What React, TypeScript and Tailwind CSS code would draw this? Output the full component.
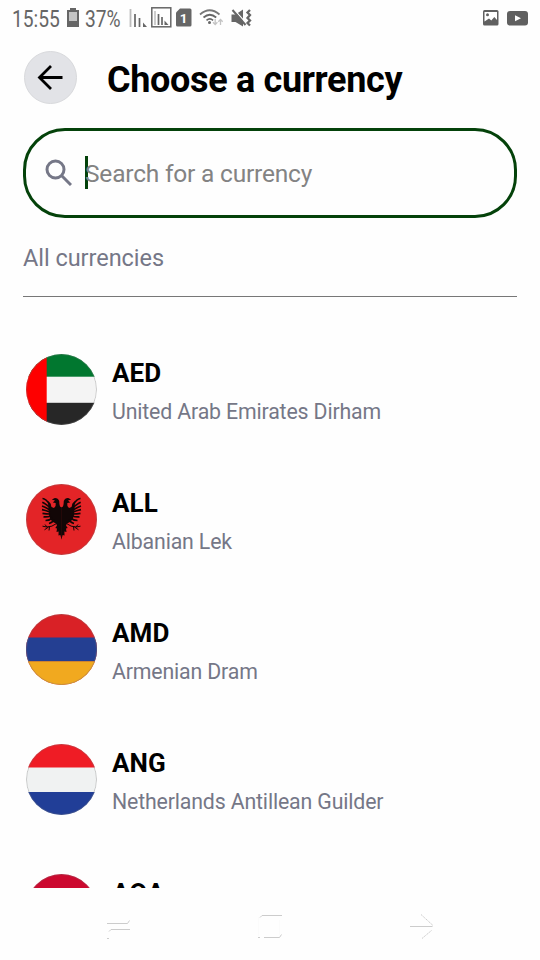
import type { ReactNode } from "react";

interface Currency {
  code: string;
  name?: string;
  flag: ReactNode;
}

function EagleHalf() {
  return (
    <g>
      <path d="M35.7 23.5L34 22.5 33.4 20 33.2 17Q32 13.8 28.8 14L25.8 15.5 29 16.5 26.8 18.5 29.7 19 29.6 22 28 24 25.5 23 24.5 19.5 22 17 22.5 24 23 31 24.5 35.5 27 38 30 39.5 31 41.5 29.3 44 31 44.5 30.5 48 32.6 47.5 32.5 51.5 34.3 51 35.7 55.5z" />
      <path
        d="M24 21Q20 14.5 16.5 14.5M24 23.5Q19 19.5 16.3 18.3M24 26Q19 22.8 16 22M24 28Q19 26.3 16 25.7M24.5 30Q20 29.8 16.5 29.3M25 32Q21 33.2 17.5 32.8M26.5 34Q23.5 36.5 19.5 36.5M28 35.5Q27 38.5 23 39.5"
        fill="none"
        stroke="#120606"
        strokeWidth="1.7"
      />
      <path
        d="M30.5 39.5Q26 43 21 43L16.5 42.2M22.5 43L18.5 45.8M23.5 42.8L23 46.5M21 43L19 40.5"
        fill="none"
        stroke="#120606"
        strokeWidth="1"
      />
    </g>
  );
}

const currencies: Currency[] = [
  {
    code: "AED",
    name: "United Arab Emirates Dirham",
    flag: (
      <>
        <rect width="71" height="71" fill="#f4f4f4" />
        <rect width="71" height="22.7" fill="#01772f" />
        <rect y="48.8" width="71" height="23" fill="#272727" />
        <rect width="20.7" height="71" fill="#fe0000" />
      </>
    ),
  },
  {
    code: "ALL",
    name: "Albanian Lek",
    flag: (
      <>
        <rect width="71" height="71" fill="#e32427" />
        <g fill="#120606">
          <EagleHalf />
          <g transform="translate(71 0) scale(-1 1)">
            <EagleHalf />
          </g>
        </g>
      </>
    ),
  },
  {
    code: "AMD",
    name: "Armenian Dram",
    flag: (
      <>
        <rect width="71" height="71" fill="#d92126" />
        <rect y="23.5" width="71" height="24" fill="#243f92" />
        <rect y="47.3" width="71" height="24" fill="#f1a91f" />
      </>
    ),
  },
  {
    code: "ANG",
    name: "Netherlands Antillean Guilder",
    flag: (
      <>
        <rect width="71" height="71" fill="#f0f2f2" />
        <rect width="71" height="23.5" fill="#ef1c25" />
        <rect y="48" width="71" height="23" fill="#213e97" />
      </>
    ),
  },
  {
    code: "AOA",
    flag: (
      <>
        <rect width="71" height="36" fill="#cc092f" />
        <rect y="35.5" width="71" height="36" fill="#000000" />
      </>
    ),
  },
];

function StatusBar() {
  return (
    <div className="flex h-9 shrink-0 items-center justify-between px-3 text-[#666666]">
      <div className="flex h-9 items-center">
        <span className="w-[54px] origin-left scale-x-[0.8] pt-0.5 text-2xl leading-9 whitespace-nowrap">15:55</span>
        <svg className="h-9 w-[19px]" viewBox="66 0 19 36">
          <path d="M70 8h6v2h3v17H67V10h3z" fill="#666" />
          <path d="M69 12h8v9h-8z" fill="#c4c4c4" />
        </svg>
        <span className="w-[44px] origin-left scale-x-[0.8] pt-0.5 text-2xl leading-9 whitespace-nowrap">37%</span>
        <svg className="h-9 w-[130px]" viewBox="129 0 130 36" fill="none">
          {/* signal bars */}
          <path d="M130.5 9v18" stroke="#bcbcbc" strokeWidth="1.8" />
          <path d="M135 14v13M139.5 18v9" stroke="#666" strokeWidth="1.7" />
          <path d="M143 22.5l4 4.500h-4z" fill="#666" />
          <rect x="151.8" y="7.8" width="19" height="19" stroke="#666" strokeWidth="1.5" />
          <path d="M155 11v14" stroke="#bcbcbc" strokeWidth="1.5" />
          <path d="M158.5 14v11M162 17v8" stroke="#666" strokeWidth="1.7" />
          <path d="M164.5 20.5l4 4.500h-4z" fill="#666" />
          {/* sim */}
          <path d="M180 8.500h10q1.500 0 1.500 1.500v15q0 1.500-1.500 1.500h-12.500q-1.500 0-1.500-1.500V12.500z" fill="#666" />
          <text x="179.800" y="22.500" fontSize="13.500" fontWeight="700" fill="#fff">1</text>
          {/* wifi */}
          <path d="M200 14.500q9.500-8.500 19.500 0" stroke="#777" strokeWidth="1.700" />
          <path d="M203.500 17.500q6.300-5.500 12.700 0" stroke="#666" strokeWidth="1.700" />
          <path d="M206.500 20.300q3.300-2.700 6.600 0" stroke="#666" strokeWidth="1.700" />
          <circle cx="209.500" cy="22.500" r="1.500" fill="#666" />
          <path
            d="M215.200 19v5M213 22.300l2.200 2.200 2.200-2.200M220.500 25v-5M218.300 21.700l2.200-2.200 2.200 2.200"
            stroke="#c4c4c4"
            strokeWidth="1.300"
          />
          {/* muted speaker */}
          <path d="M231.500 14.500h4l7.500-5v17l-7.500-4.500h-4z" fill="#666" />
          <path d="M234 9.500l12 13.500" stroke="#fefefe" strokeWidth="1.200" />
          <path d="M232.500 10l13 15" stroke="#666" strokeWidth="2" />
          <path d="M250 10l-2.500 2.500 2.500 2.500-2.500 3 2.500 2.500-2.500 2.500 2.500 2.500" stroke="#666" strokeWidth="2.300" />
        </svg>
      </div>
      <svg className="h-9 w-[46px]" viewBox="482 0 46 36">
        <rect x="483" y="10" width="15.5" height="15.5" rx="1.5" fill="#606060" />
        <path d="M484.500 12h12.500v8l-2.700-3-3 3.500-2.300-2-4.500 3z" fill="#fff" />
        <circle cx="487.5" cy="14.8" r="1.5" fill="#606060" />
        <rect x="507" y="11" width="21" height="14.5" rx="3" fill="#606060" />
        <path d="M515 15.300v6l6-3z" fill="#fff" />
      </svg>
    </div>
  );
}

function CurrencyRow({ code, name, flag }: Currency) {
  return (
    <div className="flex h-[130px] shrink-0 items-start pt-[30px]">
      <svg className="size-[71px] shrink-0 rounded-full" viewBox="0 0 71 71">
        {flag}
        <circle cx="35.5" cy="35.5" r="35" fill="none" stroke="#777777" strokeOpacity="0.35" />
      </svg>
      <div className="ml-[15px] whitespace-nowrap">
        <p className="text-[26px] leading-[38px] font-bold tracking-[0.1px] text-black">{code}</p>
        {name && (
          <p className="pt-px text-[21.3px] leading-[38px] tracking-[-0.15px] text-[#757787]">{name}</p>
        )}
      </div>
    </div>
  );
}

export default function App() {
  return (
    <div className="flex h-[960px] w-[540px] flex-col overflow-hidden bg-[#fefefe] font-['Roboto',sans-serif]">
      <StatusBar />

      <header className="flex h-[92px] shrink-0 items-start pt-[15px] pl-6">
        <button className="flex size-[53px] items-center justify-center rounded-full border border-[#d8d9dc] bg-[#e2e3e7]">
          <svg className="mr-px h-[26px] w-[26px]" viewBox="0 0 26 26" fill="none" stroke="#000" strokeWidth="2.8">
            <path d="M25.500 12.500H2.500M14 1L2.500 12.500 14 24" />
          </svg>
        </button>
        <h1 className="ml-[30px] text-[36px] leading-[58px] font-bold tracking-[-0.33px] whitespace-nowrap text-black">
          Choose a currency
        </h1>
      </header>

      <div className="mx-[23px] flex h-[90px] shrink-0 items-center rounded-[42px] border-3 border-[#04420a] pl-[19px]">
        <svg className="mb-px size-[27px] shrink-0" viewBox="0 0 27 27" fill="none" stroke="#757787" strokeWidth="3">
          <circle cx="10.5" cy="10.5" r="8.5" />
          <path d="M16.500 16.500l9.500 9.500" />
        </svg>
        <div className="ml-[13px] flex items-center">
          <span className="mb-0.5 h-[33px] w-[3px] bg-[#04420a]" />
          <span className="-ml-[3px] pt-px text-[24.5px] leading-[36px] tracking-[-0.2px] whitespace-nowrap text-[#838383]">
            Search for a currency
          </span>
        </div>
      </div>

      <div className="mx-[23px] flex h-[79px] shrink-0 items-start border-b border-[#777777] pt-[22px]">
        <h2 className="text-[23.5px] leading-[37px] tracking-[-0.04px] whitespace-nowrap text-[#757787]">
          All currencies
        </h2>
      </div>

      <main className="flex h-[591px] shrink-0 flex-col overflow-hidden pt-[27px] pl-[26px]">
        {currencies.map((currency) => (
          <CurrencyRow key={currency.code} {...currency} />
        ))}
      </main>

      <nav className="flex h-[72px] shrink-0 items-start pt-[26px] pl-[106px]">
        <svg className="h-7 w-[24px]" viewBox="106 914 24 28" fill="none" stroke="#cccccc">
          <path d="M107 923.500h20.500l2-3M109 931.500l2-2h19M107 938.500h2" />
        </svg>
        <svg className="ml-[127px] h-7 w-[26px]" viewBox="257 914 26 28" fill="none" stroke="#cccccc">
          <path d="M260 917.500l2-2h20M258 937.500h2M264 937.500h15.500l2-3" />
          <path d="M258.500 917v19M279.500 920v15" stroke="#fbfbfb" />
        </svg>
        <svg className="ml-[126px] h-7 w-[26px]" viewBox="409 914 26 28" fill="none" stroke="#cccccc">
          <path d="M410 926.500h22.500" />
          <path d="M421 914.500l12 11M422 938.500l9.500-8" strokeDasharray="1.500 0.700" />
        </svg>
      </nav>
    </div>
  );
}
